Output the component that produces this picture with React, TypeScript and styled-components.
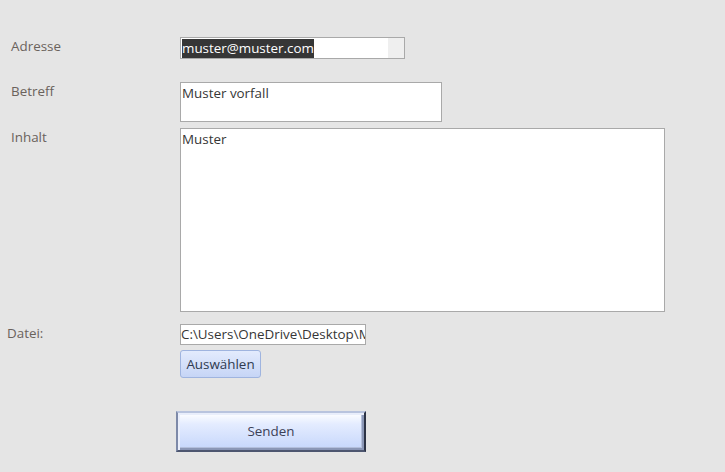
import React from 'react';
import styled, { createGlobalStyle } from 'styled-components';

const GlobalStyle = createGlobalStyle`
  html, body {
    margin: 0;
    padding: 0;
    background: #e5e5e5;
  }
  body {
    font-family: 'Open Sans', 'Noto Sans', sans-serif;
    font-size: 13.4px;
  }
`;

const App = () => {
  return (
    <>
      <GlobalStyle />
      <Form>
        <Row $top={37}>
          <Label>Adresse</Label>
          <AddressField>
            <FieldText>
              <Selected>muster@muster.com</Selected>
            </FieldText>
            <ScrollStub />
          </AddressField>
        </Row>
        <Row $top={23}>
          <Label>Betreff</Label>
          <Field $width={262} $height={40}>
            <FieldText>Muster vorfall</FieldText>
          </Field>
        </Row>
        <Row $top={6}>
          <Label>Inhalt</Label>
          <Field $width={485} $height={184}>
            <FieldText>Muster</FieldText>
          </Field>
        </Row>
        <Row $top={12}>
          <Label $indent={7}>Datei:</Label>
          <FileColumn>
            <Field $width={186} $height={21}>
              <PathText>C:\Users\OneDrive\Desktop\Muster.pdf</PathText>
            </Field>
            <PickButton type="button">Auswählen</PickButton>
          </FileColumn>
        </Row>
        <SendRow>
          <SendButton type="button">Senden</SendButton>
        </SendRow>
      </Form>
    </>
  );
};

export default App;

const Form = styled.div`
  display: flex;
  flex-direction: column;
  width: 725px;
  height: 472px;
  box-sizing: border-box;
`;

const Row = styled.div<{ $top: number }>`
  display: grid;
  grid-template-columns: 180px 1fr;
  align-items: start;
  margin-top: ${(p) => p.$top}px;
`;

const Label = styled.div<{ $indent?: number }>`
  padding-left: ${(p) => p.$indent ?? 11}px;
  color: #6a625c;
  line-height: 18px;
`;

const Field = styled.div<{ $width: number; $height: number }>`
  width: ${(p) => p.$width}px;
  height: ${(p) => p.$height}px;
  box-sizing: border-box;
  border: 1px solid #a9a9a9;
  background: #ffffff;
  overflow: hidden;
`;

const AddressField = styled.div`
  width: 225px;
  height: 22px;
  box-sizing: border-box;
  border: 1px solid #a9a9a9;
  background: #ffffff;
  display: grid;
  grid-template-columns: 1fr 16px;
`;

const ScrollStub = styled.div`
  background: #efefef;
`;

const FieldText = styled.div`
  padding: 1px 0 0 1px;
  color: #363636;
  line-height: 18px;
  white-space: nowrap;
`;

const Selected = styled.span`
  display: inline-block;
  background: #363636;
  color: #ffffff;
  line-height: 19px;
  margin-top: -1px;
`;

const PathText = styled.div`
  color: #363636;
  line-height: 19px;
  white-space: nowrap;
  overflow: hidden;
`;

const FileColumn = styled.div`
  display: flex;
  flex-direction: column;
  align-items: flex-start;
  gap: 5px;
`;

const PickButton = styled.button`
  width: 81px;
  height: 28px;
  padding: 0;
  border: 1px solid #9fb4df;
  border-radius: 3px;
  background: linear-gradient(#e3ebfd, #c6d5f6);
  color: #2f3a50;
  font-family: inherit;
  font-size: 13.4px;
`;

const SendRow = styled.div`
  margin-top: 33px;
  padding-left: 176px;
`;

const SendButton = styled.button`
  width: 190px;
  height: 41px;
  padding: 0 0 2px;
  box-sizing: border-box;
  border: 2px solid;
  border-color: #b9c4de #2c3346 #4d5670 #7d89a8;
  background: linear-gradient(#ffffff 0%, #e4ecff 30%, #c5d6fb 100%);
  box-shadow: inset 2px 2px 0 #e9eefb, inset -2px -2px 0 #8b97b6,
    inset -3px -3px 0 #b3bfdc;
  color: #3c4157;
  font-family: inherit;
  font-size: 13.4px;
`;
